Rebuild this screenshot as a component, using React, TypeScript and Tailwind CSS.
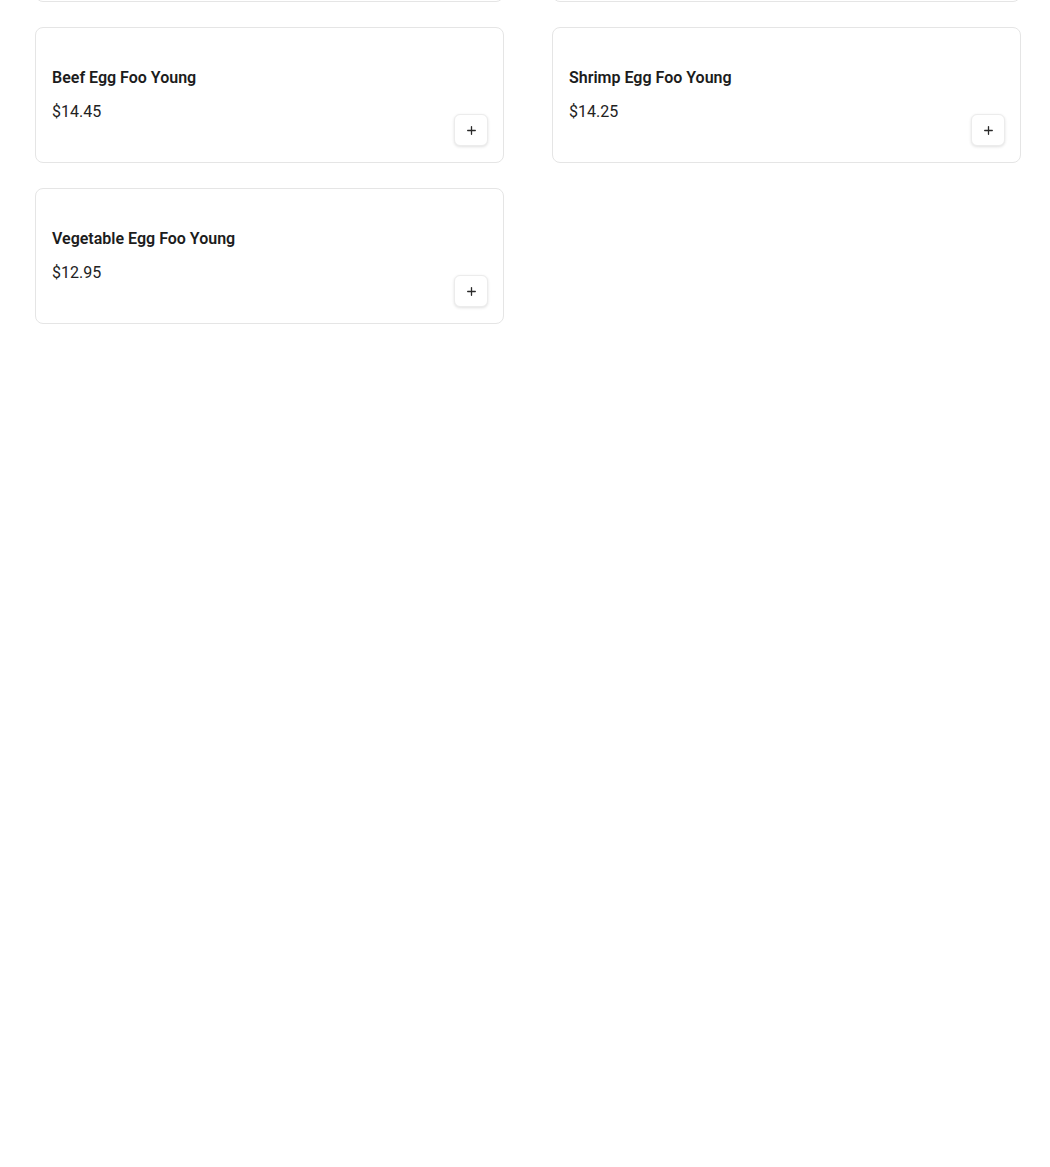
import { Plus } from "lucide-react";

const ITEMS = [
  { name: "Chicken Egg Foo Young", price: "$13.95" },
  { name: "Pork Egg Foo Young", price: "$13.95" },
  { name: "Beef Egg Foo Young", price: "$14.45" },
  { name: "Shrimp Egg Foo Young", price: "$14.25" },
  { name: "Vegetable Egg Foo Young", price: "$12.95" },
];

function MenuCard({ name, price }: { name: string; price: string }) {
  return (
    <div className="flex h-[136px] items-end justify-between rounded-lg border border-[#e5e5e5] bg-white py-4 pl-4 pr-[15px]">
      <div className="self-start pt-[23px]">
        <h3 className="text-base font-semibold leading-[22px] text-[#1c1c1c]">
          {name}
        </h3>
        <p className="mt-3 text-base leading-[22px] text-[#222]">{price}</p>
      </div>
      <button
        type="button"
        className="flex h-8 w-[34px] items-center justify-center rounded-md border border-[#ececec] bg-white shadow-[0_1px_3px_rgba(0,0,0,0.12)]"
      >
        <Plus size={13} strokeWidth={2.4} className="text-[#2a2a2a]" />
      </button>
    </div>
  );
}

export default function App() {
  return (
    <div
      className="min-h-[1167px] overflow-hidden bg-white"
      style={{ fontFamily: "Roboto, 'Liberation Sans', sans-serif" }}
    >
      <div className="-mt-[134px] grid grid-cols-2 gap-x-12 gap-y-[25px] pl-[35px] pr-[29px]">
        {ITEMS.map((item) => (
          <MenuCard key={item.name} name={item.name} price={item.price} />
        ))}
      </div>
    </div>
  );
}
